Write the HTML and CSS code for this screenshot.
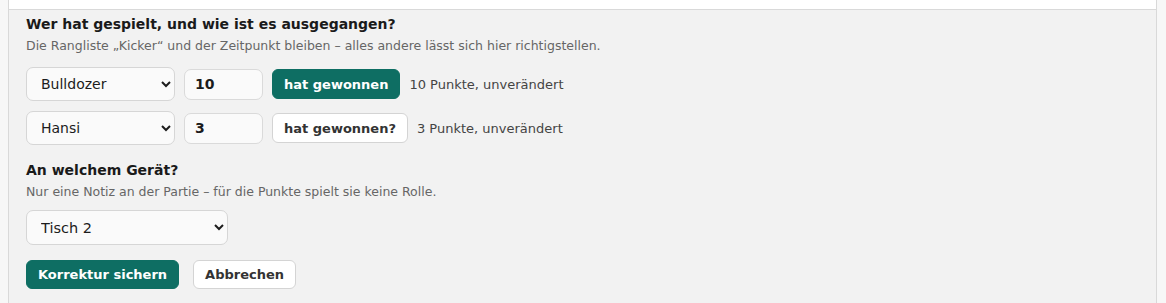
FILE: index.html
```html
<!DOCTYPE html>
<html lang="de">
<head>
  <meta charset="UTF-8">
  <title>Partie korrigieren</title>
  <link rel="stylesheet" href="styles.css">
</head>
<body>
<div class="card">
  <div class="card-top"></div>
  <form class="edit-panel">
    <h3>Wer hat gespielt, und wie ist es ausgegangen?</h3>
    <p class="hint">Die Rangliste „Kicker“ und der Zeitpunkt bleiben – alles andere lässt sich hier richtigstellen.</p>

    <div class="player-row">
      <select class="player-select">
        <option selected>Bulldozer</option>
        <option>Hansi</option>
      </select>
      <input type="text" class="score-input" value="10">
      <button type="button" class="btn btn-primary">hat gewonnen</button>
      <span class="points">10 Punkte, unverändert</span>
    </div>
    <div class="player-row">
      <select class="player-select">
        <option>Bulldozer</option>
        <option selected>Hansi</option>
      </select>
      <input type="text" class="score-input" value="3">
      <button type="button" class="btn btn-outline">hat gewonnen?</button>
      <span class="points">3 Punkte, unverändert</span>
    </div>

    <h3 class="second">An welchem Gerät?</h3>
    <p class="hint">Nur eine Notiz an der Partie – für die Punkte spielt sie keine Rolle.</p>
    <select class="table-select">
      <option>Tisch 1</option>
      <option selected>Tisch 2</option>
    </select>

    <div class="actions">
      <button type="submit" class="btn btn-primary">Korrektur sichern</button>
      <button type="button" class="btn btn-outline">Abbrechen</button>
    </div>
  </form>
</div>
</body>
</html>
```

FILE: styles.css
```css
body {
  margin: 0;
  background: #f7f7f7;
  font-family: "DejaVu Sans", sans-serif;
  color: #1c1c1c;
}
.card {
  margin-left: 8px;
  width: 1147px;
  border-left: 1px solid #d9d9d9;
  border-right: 1px solid #d9d9d9;
}
.card-top {
  height: 9px;
  background: #fff;
  border-bottom: 1px solid #d9d9d9;
}
.edit-panel {
  background: #f2f2f2;
  padding: 4px 17px 20px;
}
h3 {
  margin: 0;
  font-size: 14px;
  line-height: 20px;
  font-weight: bold;
  color: #1a1a1a;
}
h3.second {
  margin-top: 15px;
}
.hint {
  margin: 4px 0 0;
  font-size: 12.5px;
  line-height: 16px;
  color: #666;
}
.player-row {
  display: flex;
  align-items: center;
  gap: 9px;
  margin-top: 13px;
}
.player-row + .player-row {
  margin-top: 10px;
}
select {
  font-family: "DejaVu Sans", sans-serif;
  color: #1c1c1c;
  background: #fafafa;
  border: 1px solid #d6d6d6;
  border-radius: 7px;
  padding: 0 10px 0 10px;
}
.player-select {
  width: 149px;
  height: 34px;
  font-size: 14px;
}
.table-select {
  display: block;
  margin-top: 10px;
  width: 202px;
  height: 35px;
  font-size: 14.5px;
}
.score-input {
  box-sizing: border-box;
  width: 79px;
  height: 31px;
  padding: 0 10px;
  border: 1px solid #dadada;
  border-radius: 7px;
  background: #fafafa;
  font-family: "DejaVu Sans", sans-serif;
  font-size: 14px;
  font-weight: bold;
  color: #1c1c1c;
}
.btn {
  height: 30px;
  padding: 0 11px;
  border-radius: 6px;
  font-family: "DejaVu Sans", sans-serif;
  font-size: 13px;
  font-weight: bold;
  cursor: pointer;
}
.btn-primary {
  background: #0e6e63;
  border: 1px solid #0e6e63;
  color: #fff;
}
.btn-outline {
  background: #fff;
  border: 1px solid #d4d4d4;
  color: #333;
}
.points {
  font-size: 13px;
  color: #444;
}
.actions {
  display: flex;
  gap: 14px;
  margin-top: 15px;
}
.actions .btn {
  height: 29px;
}
```
